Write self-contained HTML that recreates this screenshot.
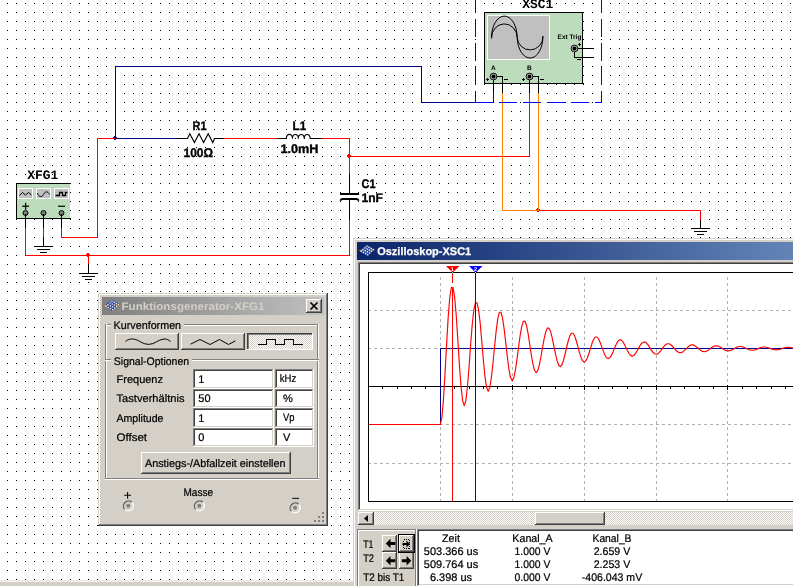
<!DOCTYPE html>
<html lang="de"><head><meta charset="utf-8"><title>Oszilloskop-XSC1</title>
<style>html,body{margin:0;padding:0;background:#fff;overflow:hidden}svg{display:block;will-change:transform}text{shape-rendering:auto;text-rendering:geometricPrecision}</style>
</head><body>
<svg width="793" height="586" viewBox="0 0 793 586" shape-rendering="crispEdges">
<defs><pattern id="g" x="0" y="0" width="9" height="9" patternUnits="userSpaceOnUse"><rect x="7" y="3" width="1" height="1" fill="#000"/></pattern><pattern id="dz" x="0" y="0" width="2" height="2" patternUnits="userSpaceOnUse"><rect width="2" height="2" fill="#fff"/><rect x="0" y="0" width="1" height="1" fill="#d4d0c8"/><rect x="1" y="1" width="1" height="1" fill="#d4d0c8"/></pattern><linearGradient id="tg" gradientUnits="userSpaceOnUse" x1="357" y1="0" x2="1113" y2="0"><stop offset="0" stop-color="#0a246a"/><stop offset="1" stop-color="#a6caf0"/></linearGradient><linearGradient id="ig" gradientUnits="userSpaceOnUse" x1="102" y1="0" x2="324" y2="0"><stop offset="0" stop-color="#808080"/><stop offset="1" stop-color="#c0c0c0"/></linearGradient></defs>
<rect x="0" y="0" width="793" height="586" fill="#fff"/>
<rect x="0" y="0" width="793" height="586" fill="url(#g)"/>
<rect x="0" y="580" width="353" height="1" fill="#ebe9e4"/>
<rect x="0" y="581" width="353" height="1" fill="#f6f5f2"/>
<rect x="0" y="582" width="353" height="4" fill="#d4d0c8"/>
<rect x="115" y="66" width="1" height="73" fill="#000084"/>
<rect x="115" y="66" width="307" height="1" fill="#000084"/>
<rect x="421" y="66" width="1" height="37" fill="#000084"/>
<rect x="421" y="102" width="55" height="1" fill="#000084"/>
<rect x="475" y="102" width="19" height="1" fill="#0000ff"/>
<rect x="493" y="93" width="1" height="10" fill="#0000ff"/>
<rect x="493" y="84" width="1" height="9" fill="#000000"/>
<rect x="115" y="138" width="64" height="1" fill="#000084"/>
<rect x="97" y="138" width="18" height="1" fill="#ff0000"/>
<rect x="97" y="138" width="1" height="100" fill="#ff0000"/>
<rect x="61" y="237" width="37" height="1" fill="#ff0000"/>
<rect x="25" y="213" width="1" height="15" fill="#000000"/>
<rect x="43" y="213" width="1" height="15" fill="#000000"/>
<rect x="61" y="213" width="1" height="15" fill="#000000"/>
<rect x="61" y="228" width="1" height="10" fill="#ff0000"/>
<rect x="25" y="228" width="1" height="28" fill="#ff0000"/>
<rect x="25" y="255" width="325" height="1" fill="#ff0000"/>
<rect x="43" y="228" width="1" height="9" fill="#ff0000"/>
<rect x="43" y="237" width="1" height="10" fill="#000000"/>
<rect x="34" y="246" width="19" height="1" fill="#000000"/>
<rect x="37" y="249" width="13" height="1" fill="#000000"/>
<rect x="40" y="252" width="7" height="1" fill="#000000"/>
<rect x="88" y="255" width="1" height="9" fill="#ff0000"/>
<rect x="88" y="264" width="1" height="10" fill="#000000"/>
<rect x="79" y="273" width="19" height="1" fill="#000000"/>
<rect x="82" y="276" width="13" height="1" fill="#000000"/>
<rect x="85" y="279" width="7" height="1" fill="#000000"/>
<rect x="178" y="138" width="10" height="1" fill="#000000"/>
<rect x="214" y="138" width="10" height="1" fill="#000000"/>
<path shape-rendering="auto" d="M187.5 138.5L189.8 133.8L194.4 142.6L199 133.8L203.6 142.6L208.2 133.8L212.8 142.6L214.5 138.5" fill="none" stroke="#000" stroke-width="1.1" stroke-linejoin="miter"/>
<rect x="224" y="138" width="53" height="1" fill="#ff0000"/>
<rect x="277" y="138" width="10" height="1" fill="#000000"/>
<rect x="310" y="138" width="12" height="1" fill="#000000"/>
<path shape-rendering="auto" d="M286.5 138.5C285.9 133.0 293.0 133.0 292.4 138.8C291.8 133.0 298.9 133.0 298.3 138.8C297.7 133.0 304.8 133.0 304.2 138.8C303.6 133.0 310.7 133.0 310.1 138.8" fill="none" stroke="#000" stroke-width="1.1"/>
<rect x="322" y="138" width="28" height="1" fill="#ff0000"/>
<rect x="349" y="138" width="1" height="36" fill="#ff0000"/>
<rect x="349" y="174" width="1" height="20" fill="#000000"/>
<rect x="349" y="199" width="1" height="21" fill="#000000"/>
<rect x="340" y="193" width="19" height="2" fill="#000000"/>
<rect x="342" y="198" width="15" height="2" fill="#000000"/>
<path shape-rendering="auto" d="M340.3 200.6 Q341 199 343 199 M356 199 Q358 199 358.700 200.600" fill="none" stroke="#000" stroke-width="1.8"/>
<rect x="349" y="220" width="1" height="36" fill="#ff0000"/>
<rect x="349" y="156" width="181" height="1" fill="#ff0000"/>
<rect x="529" y="93" width="1" height="64" fill="#ff0000"/>
<rect x="529" y="84" width="1" height="9" fill="#000000"/>
<rect x="502" y="93" width="1" height="118" fill="#ff8000"/>
<rect x="538" y="93" width="1" height="118" fill="#ff8000"/>
<rect x="502" y="210" width="37" height="1" fill="#ff8000"/>
<rect x="538" y="210" width="163" height="1" fill="#ff0000"/>
<rect x="700" y="210" width="1" height="10" fill="#ff0000"/>
<rect x="700" y="220" width="1" height="9" fill="#000000"/>
<rect x="691" y="228" width="19" height="1" fill="#000000"/>
<rect x="694" y="231" width="13" height="1" fill="#000000"/>
<rect x="697" y="234" width="7" height="1" fill="#000000"/>
<rect x="114" y="136" width="2" height="4" fill="#000084"/>
<rect x="113" y="137" width="4" height="2" fill="#000084"/>
<rect x="87" y="253" width="2" height="4" fill="#ff0000"/>
<rect x="86" y="254" width="4" height="2" fill="#ff0000"/>
<rect x="348" y="154" width="2" height="4" fill="#ff0000"/>
<rect x="347" y="155" width="4" height="2" fill="#ff0000"/>
<rect x="537" y="208" width="2" height="4" fill="#ff0000"/>
<rect x="536" y="209" width="4" height="2" fill="#ff0000"/>
<rect x="97" y="138" width="19" height="1" fill="#ff0000"/>
<rect x="538" y="93" width="1" height="118" fill="#ff8000"/>
<rect x="502" y="210" width="37" height="1" fill="#ff8000"/>
<text x="192.5" y="129.6" font-family="&quot;Liberation Sans&quot;, sans-serif" font-size="12.5" font-weight="bold" fill="#000" text-anchor="start" textLength="14" lengthAdjust="spacingAndGlyphs" stroke="#000" stroke-width="0.35">R1</text>
<text x="183.5" y="156.5" font-family="&quot;Liberation Sans&quot;, sans-serif" font-size="12.5" font-weight="bold" fill="#000" text-anchor="start" textLength="29.5" lengthAdjust="spacingAndGlyphs" stroke="#000" stroke-width="0.35">100Ω</text>
<text x="292.6" y="129.6" font-family="&quot;Liberation Sans&quot;, sans-serif" font-size="12.5" font-weight="bold" fill="#000" text-anchor="start" textLength="13.5" lengthAdjust="spacingAndGlyphs" stroke="#000" stroke-width="0.35">L1</text>
<text x="280.5" y="152.6" font-family="&quot;Liberation Sans&quot;, sans-serif" font-size="12.5" font-weight="bold" fill="#000" text-anchor="start" textLength="38" lengthAdjust="spacingAndGlyphs" stroke="#000" stroke-width="0.35">1.0mH</text>
<text x="361.5" y="187.6" font-family="&quot;Liberation Sans&quot;, sans-serif" font-size="12.5" font-weight="bold" fill="#000" text-anchor="start" textLength="14" lengthAdjust="spacingAndGlyphs" stroke="#000" stroke-width="0.35">C1</text>
<text x="361.5" y="201.6" font-family="&quot;Liberation Sans&quot;, sans-serif" font-size="12.5" font-weight="bold" fill="#000" text-anchor="start" textLength="21.5" lengthAdjust="spacingAndGlyphs" stroke="#000" stroke-width="0.35">1nF</text>
<rect x="16" y="183" width="54" height="36" fill="#bcdcbc"/>
<rect x="16" y="183" width="55" height="1" fill="#000000"/>
<rect x="16" y="218" width="55" height="1" fill="#000000"/>
<rect x="16" y="183" width="1" height="36" fill="#000000"/>
<rect x="70" y="183" width="1" height="1" fill="#000000"/>
<rect x="70" y="192" width="1" height="1" fill="#000000"/>
<rect x="70" y="201" width="1" height="1" fill="#000000"/>
<rect x="70" y="210" width="1" height="1" fill="#000000"/>
<rect x="70" y="219" width="1" height="1" fill="#000000"/>
<rect x="18" y="188" width="15" height="11" fill="#ffffff"/>
<rect x="19" y="189" width="13" height="9" fill="#c0c0c0"/>
<rect x="36" y="188" width="15" height="11" fill="#ffffff"/>
<rect x="37" y="189" width="13" height="9" fill="#c0c0c0"/>
<rect x="54" y="188" width="15" height="11" fill="#ffffff"/>
<rect x="55" y="189" width="13" height="9" fill="#c0c0c0"/>
<g shape-rendering="auto" fill="none" stroke="#000" stroke-width="1"><path d="M19.5 195.5L22.5 192.5L25.5 195L28.5 192.5L31.5 195"/><path d="M37.5 193C38.5 197.5 42 197.5 43.5 194.5C45 191 48 191 49.5 194.5"/></g>
<path d="M55.5 195.5H59.5V192.5H62.5V195.5H65.5V192.5H67.5" fill="none" stroke="#000" stroke-width="1.3" shape-rendering="auto"/>
<text x="25.5" y="211" font-family="&quot;Liberation Sans&quot;, sans-serif" font-size="14" font-weight="normal" fill="#000" text-anchor="middle" stroke="#000" stroke-width="0.2">+</text>
<text x="61.5" y="211" font-family="&quot;Liberation Sans&quot;, sans-serif" font-size="14" font-weight="normal" fill="#000" text-anchor="middle" stroke="#000" stroke-width="0.2">−</text>
<circle shape-rendering="auto" cx="25.5" cy="213" r="2.5" fill="#808080" stroke="#000" stroke-width="1"/>
<rect x="25" y="214" width="1" height="6" fill="#000000"/>
<circle shape-rendering="auto" cx="43.5" cy="213" r="2.5" fill="#808080" stroke="#000" stroke-width="1"/>
<rect x="43" y="214" width="1" height="6" fill="#000000"/>
<circle shape-rendering="auto" cx="61.5" cy="213" r="2.5" fill="#808080" stroke="#000" stroke-width="1"/>
<rect x="61" y="214" width="1" height="6" fill="#000000"/>
<text x="42.8" y="178.8" font-family="&quot;Liberation Mono&quot;, monospace" font-size="13" font-weight="bold" fill="#000" text-anchor="middle" textLength="31" lengthAdjust="spacingAndGlyphs">XFG1</text>
<rect x="484" y="12" width="99" height="72" fill="#bcdcbc"/>
<rect x="484" y="12" width="100" height="1" fill="#000000"/>
<rect x="484" y="83" width="100" height="1" fill="#000000"/>
<rect x="484" y="12" width="1" height="72" fill="#000000"/>
<rect x="582" y="12" width="1" height="72" fill="#000000"/>
<rect x="583" y="12" width="1" height="1" fill="#000000"/>
<rect x="583" y="21" width="1" height="1" fill="#000000"/>
<rect x="583" y="30" width="1" height="1" fill="#000000"/>
<rect x="583" y="39" width="1" height="1" fill="#000000"/>
<rect x="583" y="48" width="1" height="1" fill="#000000"/>
<rect x="583" y="57" width="1" height="1" fill="#000000"/>
<rect x="583" y="66" width="1" height="1" fill="#000000"/>
<rect x="583" y="75" width="1" height="1" fill="#000000"/>
<rect x="583" y="84" width="1" height="1" fill="#000000"/>
<rect x="487" y="15" width="63" height="45" fill="#ffffff"/>
<rect x="488" y="16" width="61" height="43" fill="#c0c0c0"/>
<path shape-rendering="auto" d="M491.5 38.2A12.8 21.6 0 0 1 517.2 37.3A12.8 21.2 0 0 0 542.900 36.200" fill="none" stroke="#000" stroke-width="1"/>
<path shape-rendering="auto" d="M491.5 38.2A12.8 13.8 0 0 1 517.2 37.3A12.8 13.1 0 0 0 542.900 36.200" fill="none" stroke="#000" stroke-width="1"/>
<text x="537.7" y="7.8" font-family="&quot;Liberation Mono&quot;, monospace" font-size="13" font-weight="bold" fill="#000" text-anchor="middle" textLength="31" lengthAdjust="spacingAndGlyphs">XSC1</text>
<rect x="493" y="76" width="10" height="1" fill="#000000"/>
<rect x="529" y="76" width="10" height="1" fill="#000000"/>
<rect x="493" y="76" width="1" height="9" fill="#000000"/>
<rect x="529" y="76" width="1" height="9" fill="#000000"/>
<rect x="502" y="76" width="1" height="17" fill="#000000"/>
<rect x="538" y="76" width="1" height="17" fill="#000000"/>
<circle shape-rendering="auto" cx="493.5" cy="76.5" r="3.4" fill="#b0b0b0" stroke="#000" stroke-width="0.9"/><circle shape-rendering="auto" cx="493.5" cy="76.5" r="1.9" fill="#000"/>
<circle shape-rendering="auto" cx="529.5" cy="76.5" r="3.4" fill="#b0b0b0" stroke="#000" stroke-width="0.9"/><circle shape-rendering="auto" cx="529.5" cy="76.5" r="1.9" fill="#000"/>
<text x="493.3" y="70.2" font-family="&quot;Liberation Sans&quot;, sans-serif" font-size="6.5" font-weight="bold" fill="#000" text-anchor="middle">A</text>
<text x="529.3" y="69.8" font-family="&quot;Liberation Sans&quot;, sans-serif" font-size="6.5" font-weight="bold" fill="#000" text-anchor="middle">B</text>
<rect x="486" y="79" width="3" height="1" fill="#000000"/>
<rect x="487" y="78" width="1" height="3" fill="#000000"/>
<rect x="504" y="79" width="4" height="1" fill="#000000"/>
<rect x="522" y="79" width="3" height="1" fill="#000000"/>
<rect x="523" y="78" width="1" height="3" fill="#000000"/>
<rect x="540" y="79" width="4" height="1" fill="#000000"/>
<rect x="574" y="48" width="20" height="1" fill="#000000"/>
<rect x="574" y="48" width="1" height="10" fill="#000000"/>
<rect x="574" y="57" width="20" height="1" fill="#000000"/>
<circle shape-rendering="auto" cx="574.5" cy="48.5" r="3.4" fill="#b0b0b0" stroke="#000" stroke-width="0.9"/><circle shape-rendering="auto" cx="574.5" cy="48.5" r="1.9" fill="#000"/>
<text x="557.6" y="38.8" font-family="&quot;Liberation Sans&quot;, sans-serif" font-size="6.5" font-weight="bold" fill="#000" text-anchor="start" textLength="23.8" lengthAdjust="spacingAndGlyphs">Ext Trig</text>
<rect x="578" y="44" width="3" height="1" fill="#000000"/>
<rect x="579" y="43" width="1" height="3" fill="#000000"/>
<rect x="577" y="59" width="4" height="1" fill="#000000"/>
<rect x="475" y="0" width="1" height="13" fill="#0000ff"/>
<rect x="475" y="19" width="1" height="18" fill="#0000ff"/>
<rect x="475" y="43" width="1" height="18" fill="#0000ff"/>
<rect x="475" y="67" width="1" height="18" fill="#0000ff"/>
<rect x="475" y="91" width="1" height="12" fill="#0000ff"/>
<rect x="601" y="0" width="1" height="13" fill="#0000ff"/>
<rect x="601" y="19" width="1" height="18" fill="#0000ff"/>
<rect x="601" y="43" width="1" height="18" fill="#0000ff"/>
<rect x="601" y="67" width="1" height="18" fill="#0000ff"/>
<rect x="601" y="91" width="1" height="12" fill="#0000ff"/>
<rect x="475" y="102" width="18" height="1" fill="#0000ff"/>
<rect x="499" y="102" width="18" height="1" fill="#0000ff"/>
<rect x="523" y="102" width="18" height="1" fill="#0000ff"/>
<rect x="547" y="102" width="18" height="1" fill="#0000ff"/>
<rect x="571" y="102" width="18" height="1" fill="#0000ff"/>
<rect x="595" y="102" width="7" height="1" fill="#0000ff"/>
<rect x="98" y="293" width="230" height="233" fill="#d4d0c8"/>
<rect x="98" y="525" width="230" height="1" fill="#404040"/>
<rect x="327" y="293" width="1" height="233" fill="#404040"/>
<rect x="99" y="524" width="228" height="1" fill="#808080"/>
<rect x="326" y="294" width="1" height="231" fill="#808080"/>
<rect x="99" y="294" width="227" height="1" fill="#ffffff"/>
<rect x="99" y="294" width="1" height="230" fill="#ffffff"/>
<rect x="102" y="297" width="222" height="18" fill="url(#ig)"/>
<text x="121.5" y="309.9" font-family="&quot;Liberation Sans&quot;, sans-serif" font-size="11" font-weight="bold" fill="#d4d0c8" text-anchor="start" textLength="143" lengthAdjust="spacingAndGlyphs">Funktionsgenerator-XFG1</text>
<g shape-rendering="auto"><path d="M104.3 305.8L111.8 299.8L119.8 304.2L112.2 311Z" fill="#2c4a9c"/><rect x="111.2" y="300.6" width="1.3" height="1.3" fill="#fff"/><rect x="109.3" y="302.3" width="1.3" height="1.3" fill="#fff"/><rect x="107.4" y="304.0" width="1.3" height="1.3" fill="#fff"/><rect x="105.5" y="305.7" width="1.3" height="1.3" fill="#fff"/><rect x="113.4" y="301.7" width="1.3" height="1.3" fill="#fff"/><rect x="111.5" y="303.4" width="1.3" height="1.3" fill="#fff"/><rect x="109.6" y="305.1" width="1.3" height="1.3" fill="#fff"/><rect x="107.7" y="306.8" width="1.3" height="1.3" fill="#fff"/><rect x="115.6" y="302.8" width="1.3" height="1.3" fill="#fff"/><rect x="113.7" y="304.5" width="1.3" height="1.3" fill="#fff"/><rect x="111.8" y="306.2" width="1.3" height="1.3" fill="#fff"/><rect x="109.9" y="307.9" width="1.3" height="1.3" fill="#fff"/><rect x="117.8" y="303.9" width="1.3" height="1.3" fill="#fff"/><rect x="115.9" y="305.6" width="1.3" height="1.3" fill="#fff"/><rect x="114.0" y="307.3" width="1.3" height="1.3" fill="#fff"/><rect x="112.1" y="309.0" width="1.3" height="1.3" fill="#fff"/><path d="M104.5 305.5H107.5M115.5 305H119" stroke="#f0a020" stroke-width="1.2"/></g>
<rect x="306" y="299" width="16" height="14" fill="#d4d0c8"/>
<rect x="306" y="312" width="16" height="1" fill="#404040"/>
<rect x="321" y="299" width="1" height="14" fill="#404040"/>
<rect x="306" y="299" width="15" height="1" fill="#ffffff"/>
<rect x="306" y="299" width="1" height="13" fill="#ffffff"/>
<rect x="307" y="311" width="14" height="1" fill="#808080"/>
<rect x="320" y="300" width="1" height="12" fill="#808080"/>
<path shape-rendering="auto" d="M310.5 302.5L317.5 309.5M317.5 302.5L310.5 309.5" stroke="#000" stroke-width="1.7" fill="none"/>
<rect x="105" y="324" width="214" height="1" fill="#808080"/>
<rect x="105" y="325" width="214" height="1" fill="#ffffff"/>
<rect x="105" y="324" width="1" height="155" fill="#808080"/>
<rect x="106" y="324" width="1" height="155" fill="#ffffff"/>
<rect x="317" y="324" width="1" height="155" fill="#808080"/>
<rect x="318" y="324" width="1" height="155" fill="#ffffff"/>
<rect x="105" y="478" width="214" height="1" fill="#808080"/>
<rect x="105" y="479" width="214" height="1" fill="#ffffff"/>
<rect x="105" y="359" width="214" height="1" fill="#808080"/>
<rect x="105" y="360" width="214" height="1" fill="#ffffff"/>
<rect x="111" y="318" width="73" height="14" fill="#d4d0c8"/>
<text x="113.6" y="329" font-family="&quot;Liberation Sans&quot;, sans-serif" font-size="11" font-weight="normal" fill="#000" text-anchor="start" textLength="67.5" lengthAdjust="spacingAndGlyphs" stroke="#000" stroke-width="0.22">Kurvenformen</text>
<rect x="111" y="353" width="81" height="14" fill="#d4d0c8"/>
<text x="113.8" y="365" font-family="&quot;Liberation Sans&quot;, sans-serif" font-size="11" font-weight="normal" fill="#000" text-anchor="start" textLength="75.3" lengthAdjust="spacingAndGlyphs" stroke="#000" stroke-width="0.22">Signal-Optionen</text>
<rect x="115" y="333" width="64" height="17" fill="#d4d0c8"/>
<rect x="115" y="349" width="64" height="1" fill="#404040"/>
<rect x="178" y="333" width="1" height="17" fill="#404040"/>
<rect x="115" y="333" width="63" height="1" fill="#ffffff"/>
<rect x="115" y="333" width="1" height="16" fill="#ffffff"/>
<rect x="116" y="348" width="62" height="1" fill="#808080"/>
<rect x="177" y="334" width="1" height="15" fill="#808080"/>
<rect x="181" y="333" width="64" height="17" fill="#d4d0c8"/>
<rect x="181" y="349" width="64" height="1" fill="#404040"/>
<rect x="244" y="333" width="1" height="17" fill="#404040"/>
<rect x="181" y="333" width="63" height="1" fill="#ffffff"/>
<rect x="181" y="333" width="1" height="16" fill="#ffffff"/>
<rect x="182" y="348" width="62" height="1" fill="#808080"/>
<rect x="243" y="334" width="1" height="15" fill="#808080"/>
<rect x="247" y="333" width="66" height="17" fill="url(#dz)"/>
<rect x="247" y="333" width="66" height="1" fill="#404040"/>
<rect x="247" y="333" width="1" height="17" fill="#404040"/>
<rect x="248" y="334" width="64" height="1" fill="#808080"/>
<rect x="248" y="334" width="1" height="15" fill="#808080"/>
<rect x="247" y="349" width="66" height="1" fill="#ffffff"/>
<rect x="312" y="333" width="1" height="17" fill="#ffffff"/>
<g shape-rendering="auto" fill="none" stroke="#000" stroke-width="1"><path d="M125.5 341.3C128 339.2 131 338.8 133.5 339C139 339.5 142 344.4 148.5 344.4C155 344.4 158 339.5 164 339C166.500 338.800 168.500 339.800 170.500 341.500"/><path d="M190.5 344.2L200 339.5L210 344.5L219.5 339.5L228.5 344.5L235.5 340.8"/></g>
<path d="M257.5 344.5H266.5V339.5H275.5V344.5H284.5V339.5H293.5V344.5H302.5" fill="none" stroke="#000" stroke-width="1"/>
<rect x="193" y="369" width="81" height="20" fill="#ffffff"/>
<rect x="193" y="369" width="81" height="1" fill="#808080"/>
<rect x="193" y="369" width="1" height="20" fill="#808080"/>
<rect x="194" y="370" width="79" height="1" fill="#404040"/>
<rect x="194" y="370" width="1" height="18" fill="#404040"/>
<rect x="193" y="388" width="81" height="1" fill="#ffffff"/>
<rect x="273" y="369" width="1" height="20" fill="#ffffff"/>
<rect x="194" y="387" width="79" height="1" fill="#d4d0c8"/>
<rect x="272" y="370" width="1" height="18" fill="#d4d0c8"/>
<rect x="275" y="369" width="39" height="20" fill="#ffffff"/>
<rect x="275" y="369" width="39" height="1" fill="#808080"/>
<rect x="275" y="369" width="1" height="20" fill="#808080"/>
<rect x="276" y="370" width="37" height="1" fill="#404040"/>
<rect x="276" y="370" width="1" height="18" fill="#404040"/>
<rect x="275" y="388" width="39" height="1" fill="#ffffff"/>
<rect x="313" y="369" width="1" height="20" fill="#ffffff"/>
<rect x="276" y="387" width="37" height="1" fill="#d4d0c8"/>
<rect x="312" y="370" width="1" height="18" fill="#d4d0c8"/>
<text x="116.5" y="382.6" font-family="&quot;Liberation Sans&quot;, sans-serif" font-size="11" font-weight="normal" fill="#000" text-anchor="start" textLength="46.5" lengthAdjust="spacingAndGlyphs" stroke="#000" stroke-width="0.22">Frequenz</text>
<text x="198.3" y="382.6" font-family="&quot;Liberation Sans&quot;, sans-serif" font-size="11" font-weight="normal" fill="#000" text-anchor="start" stroke="#000" stroke-width="0.22">1</text>
<text x="279.8" y="381.6" font-family="&quot;Liberation Sans&quot;, sans-serif" font-size="11" font-weight="normal" fill="#000" text-anchor="start" textLength="16.5" lengthAdjust="spacingAndGlyphs" stroke="#000" stroke-width="0.22">kHz</text>
<rect x="193" y="389" width="81" height="19" fill="#ffffff"/>
<rect x="193" y="389" width="81" height="1" fill="#808080"/>
<rect x="193" y="389" width="1" height="19" fill="#808080"/>
<rect x="194" y="390" width="79" height="1" fill="#404040"/>
<rect x="194" y="390" width="1" height="17" fill="#404040"/>
<rect x="193" y="407" width="81" height="1" fill="#ffffff"/>
<rect x="273" y="389" width="1" height="19" fill="#ffffff"/>
<rect x="194" y="406" width="79" height="1" fill="#d4d0c8"/>
<rect x="272" y="390" width="1" height="17" fill="#d4d0c8"/>
<rect x="275" y="389" width="39" height="19" fill="#ffffff"/>
<rect x="275" y="389" width="39" height="1" fill="#808080"/>
<rect x="275" y="389" width="1" height="19" fill="#808080"/>
<rect x="276" y="390" width="37" height="1" fill="#404040"/>
<rect x="276" y="390" width="1" height="17" fill="#404040"/>
<rect x="275" y="407" width="39" height="1" fill="#ffffff"/>
<rect x="313" y="389" width="1" height="19" fill="#ffffff"/>
<rect x="276" y="406" width="37" height="1" fill="#d4d0c8"/>
<rect x="312" y="390" width="1" height="17" fill="#d4d0c8"/>
<text x="116.5" y="402.3" font-family="&quot;Liberation Sans&quot;, sans-serif" font-size="11" font-weight="normal" fill="#000" text-anchor="start" textLength="68" lengthAdjust="spacingAndGlyphs" stroke="#000" stroke-width="0.22">Tastverhältnis</text>
<text x="198.3" y="402.3" font-family="&quot;Liberation Sans&quot;, sans-serif" font-size="11" font-weight="normal" fill="#000" text-anchor="start" stroke="#000" stroke-width="0.22">50</text>
<text x="283" y="401.7" font-family="&quot;Liberation Sans&quot;, sans-serif" font-size="11" font-weight="normal" fill="#000" text-anchor="start" stroke="#000" stroke-width="0.22">%</text>
<rect x="193" y="408" width="81" height="20" fill="#ffffff"/>
<rect x="193" y="408" width="81" height="1" fill="#808080"/>
<rect x="193" y="408" width="1" height="20" fill="#808080"/>
<rect x="194" y="409" width="79" height="1" fill="#404040"/>
<rect x="194" y="409" width="1" height="18" fill="#404040"/>
<rect x="193" y="427" width="81" height="1" fill="#ffffff"/>
<rect x="273" y="408" width="1" height="20" fill="#ffffff"/>
<rect x="194" y="426" width="79" height="1" fill="#d4d0c8"/>
<rect x="272" y="409" width="1" height="18" fill="#d4d0c8"/>
<rect x="275" y="408" width="39" height="20" fill="#ffffff"/>
<rect x="275" y="408" width="39" height="1" fill="#808080"/>
<rect x="275" y="408" width="1" height="20" fill="#808080"/>
<rect x="276" y="409" width="37" height="1" fill="#404040"/>
<rect x="276" y="409" width="1" height="18" fill="#404040"/>
<rect x="275" y="427" width="39" height="1" fill="#ffffff"/>
<rect x="313" y="408" width="1" height="20" fill="#ffffff"/>
<rect x="276" y="426" width="37" height="1" fill="#d4d0c8"/>
<rect x="312" y="409" width="1" height="18" fill="#d4d0c8"/>
<text x="116.5" y="421.5" font-family="&quot;Liberation Sans&quot;, sans-serif" font-size="11" font-weight="normal" fill="#000" text-anchor="start" textLength="47" lengthAdjust="spacingAndGlyphs" stroke="#000" stroke-width="0.22">Amplitude</text>
<text x="198.3" y="421.5" font-family="&quot;Liberation Sans&quot;, sans-serif" font-size="11" font-weight="normal" fill="#000" text-anchor="start" stroke="#000" stroke-width="0.22">1</text>
<text x="283" y="420.6" font-family="&quot;Liberation Sans&quot;, sans-serif" font-size="11" font-weight="normal" fill="#000" text-anchor="start" textLength="11.5" lengthAdjust="spacingAndGlyphs" stroke="#000" stroke-width="0.22">Vp</text>
<rect x="193" y="428" width="81" height="19" fill="#ffffff"/>
<rect x="193" y="428" width="81" height="1" fill="#808080"/>
<rect x="193" y="428" width="1" height="19" fill="#808080"/>
<rect x="194" y="429" width="79" height="1" fill="#404040"/>
<rect x="194" y="429" width="1" height="17" fill="#404040"/>
<rect x="193" y="446" width="81" height="1" fill="#ffffff"/>
<rect x="273" y="428" width="1" height="19" fill="#ffffff"/>
<rect x="194" y="445" width="79" height="1" fill="#d4d0c8"/>
<rect x="272" y="429" width="1" height="17" fill="#d4d0c8"/>
<rect x="275" y="428" width="39" height="19" fill="#ffffff"/>
<rect x="275" y="428" width="39" height="1" fill="#808080"/>
<rect x="275" y="428" width="1" height="19" fill="#808080"/>
<rect x="276" y="429" width="37" height="1" fill="#404040"/>
<rect x="276" y="429" width="1" height="17" fill="#404040"/>
<rect x="275" y="446" width="39" height="1" fill="#ffffff"/>
<rect x="313" y="428" width="1" height="19" fill="#ffffff"/>
<rect x="276" y="445" width="37" height="1" fill="#d4d0c8"/>
<rect x="312" y="429" width="1" height="17" fill="#d4d0c8"/>
<text x="116.5" y="441" font-family="&quot;Liberation Sans&quot;, sans-serif" font-size="11" font-weight="normal" fill="#000" text-anchor="start" textLength="30.5" lengthAdjust="spacingAndGlyphs" stroke="#000" stroke-width="0.22">Offset</text>
<text x="198.3" y="441" font-family="&quot;Liberation Sans&quot;, sans-serif" font-size="11" font-weight="normal" fill="#000" text-anchor="start" stroke="#000" stroke-width="0.22">0</text>
<text x="283" y="440.6" font-family="&quot;Liberation Sans&quot;, sans-serif" font-size="11" font-weight="normal" fill="#000" text-anchor="start" stroke="#000" stroke-width="0.22">V</text>
<rect x="141" y="452" width="150" height="22" fill="#d4d0c8"/>
<rect x="141" y="473" width="150" height="1" fill="#404040"/>
<rect x="290" y="452" width="1" height="22" fill="#404040"/>
<rect x="141" y="452" width="149" height="1" fill="#ffffff"/>
<rect x="141" y="452" width="1" height="21" fill="#ffffff"/>
<rect x="142" y="472" width="148" height="1" fill="#808080"/>
<rect x="289" y="453" width="1" height="20" fill="#808080"/>
<text x="145" y="466.6" font-family="&quot;Liberation Sans&quot;, sans-serif" font-size="11" font-weight="normal" fill="#000" text-anchor="start" textLength="140.5" lengthAdjust="spacingAndGlyphs" stroke="#000" stroke-width="0.22">Anstiegs-/Abfallzeit einstellen</text>
<text x="127.5" y="500" font-family="&quot;Liberation Sans&quot;, sans-serif" font-size="14" font-weight="normal" fill="#000" text-anchor="middle">+</text>
<text x="295.5" y="503" font-family="&quot;Liberation Sans&quot;, sans-serif" font-size="14" font-weight="normal" fill="#000" text-anchor="middle">−</text>
<text x="183.5" y="495.7" font-family="&quot;Liberation Sans&quot;, sans-serif" font-size="11" font-weight="normal" fill="#000" text-anchor="start" textLength="29.5" lengthAdjust="spacingAndGlyphs" stroke="#000" stroke-width="0.22">Masse</text>
<g shape-rendering="auto"><circle cx="128.3" cy="505.8" r="5" fill="#d4d0c8" stroke="#fff" stroke-width="1.3"/><path d="M124.70000000000002 509.40000000000003A5.1 5.1 0 0 1 131.9 502.2" fill="none" stroke="#606060" stroke-width="1.4"/><circle cx="128.3" cy="505.8" r="2" fill="#808080"/></g>
<g shape-rendering="auto"><circle cx="199.3" cy="505.8" r="5" fill="#d4d0c8" stroke="#fff" stroke-width="1.3"/><path d="M195.70000000000002 509.40000000000003A5.1 5.1 0 0 1 202.9 502.2" fill="none" stroke="#606060" stroke-width="1.4"/><circle cx="199.3" cy="505.8" r="2" fill="#808080"/></g>
<g shape-rendering="auto"><circle cx="295" cy="507.8" r="5" fill="#d4d0c8" stroke="#fff" stroke-width="1.3"/><path d="M291.4 511.40000000000003A5.1 5.1 0 0 1 298.6 504.2" fill="none" stroke="#606060" stroke-width="1.4"/><circle cx="295" cy="507.8" r="2" fill="#808080"/></g>
<rect x="322" y="512" width="2" height="2" fill="#808080"/>
<rect x="318" y="516" width="2" height="2" fill="#808080"/>
<rect x="322" y="516" width="2" height="2" fill="#808080"/>
<rect x="314" y="520" width="2" height="2" fill="#808080"/>
<rect x="318" y="520" width="2" height="2" fill="#808080"/>
<rect x="322" y="520" width="2" height="2" fill="#808080"/>
<rect x="353" y="238" width="440" height="348" fill="#d4d0c8"/>
<rect x="354" y="239" width="439" height="1" fill="#ffffff"/>
<rect x="354" y="239" width="1" height="347" fill="#ffffff"/>
<rect x="357" y="242" width="436" height="18" fill="url(#tg)"/>
<g shape-rendering="auto"><path d="M359.3 250.8L366.8 244.8L374.8 249.2L367.2 256Z" fill="#2c4a9c"/><rect x="366.2" y="245.6" width="1.3" height="1.3" fill="#fff"/><rect x="364.3" y="247.3" width="1.3" height="1.3" fill="#fff"/><rect x="362.4" y="249.0" width="1.3" height="1.3" fill="#fff"/><rect x="360.5" y="250.7" width="1.3" height="1.3" fill="#fff"/><rect x="368.4" y="246.7" width="1.3" height="1.3" fill="#fff"/><rect x="366.5" y="248.4" width="1.3" height="1.3" fill="#fff"/><rect x="364.6" y="250.1" width="1.3" height="1.3" fill="#fff"/><rect x="362.7" y="251.8" width="1.3" height="1.3" fill="#fff"/><rect x="370.6" y="247.8" width="1.3" height="1.3" fill="#fff"/><rect x="368.7" y="249.5" width="1.3" height="1.3" fill="#fff"/><rect x="366.8" y="251.2" width="1.3" height="1.3" fill="#fff"/><rect x="364.9" y="252.9" width="1.3" height="1.3" fill="#fff"/><rect x="372.8" y="248.9" width="1.3" height="1.3" fill="#fff"/><rect x="370.9" y="250.6" width="1.3" height="1.3" fill="#fff"/><rect x="369.0" y="252.3" width="1.3" height="1.3" fill="#fff"/><rect x="367.1" y="254.0" width="1.3" height="1.3" fill="#fff"/><path d="M359.5 250.5H362.5M370.5 250H374" stroke="#f0a020" stroke-width="1.2"/></g>
<text x="377.2" y="254.7" font-family="&quot;Liberation Sans&quot;, sans-serif" font-size="11" font-weight="bold" fill="#ffffff" text-anchor="start" textLength="94" lengthAdjust="spacingAndGlyphs" stroke="#ffffff" stroke-width="0.25">Oszilloskop-XSC1</text>
<rect x="360" y="264" width="433" height="245" fill="#ffffff"/>
<rect x="358" y="262" width="435" height="1" fill="#808080"/>
<rect x="359" y="263" width="434" height="1" fill="#404040"/>
<rect x="358" y="262" width="1" height="248" fill="#808080"/>
<rect x="359" y="263" width="1" height="246" fill="#404040"/>
<rect x="359" y="509" width="434" height="1" fill="#d4d0c8"/>
<rect x="358" y="510" width="435" height="1" fill="#ffffff"/>
<path d="M440.5 277V501" stroke="#b0b0b0" stroke-width="1" stroke-dasharray="3 3" fill="none"/>
<path d="M512.5 277V501" stroke="#b0b0b0" stroke-width="1" stroke-dasharray="3 3" fill="none"/>
<path d="M584.5 277V501" stroke="#b0b0b0" stroke-width="1" stroke-dasharray="3 3" fill="none"/>
<path d="M656.5 277V501" stroke="#b0b0b0" stroke-width="1" stroke-dasharray="3 3" fill="none"/>
<path d="M727.5 277V501" stroke="#b0b0b0" stroke-width="1" stroke-dasharray="3 3" fill="none"/>
<path d="M368 310.5H793" stroke="#b0b0b0" stroke-width="1" stroke-dasharray="3 3" fill="none"/>
<path d="M368 348.5H793" stroke="#b0b0b0" stroke-width="1" stroke-dasharray="3 3" fill="none"/>
<path d="M368 424.5H793" stroke="#b0b0b0" stroke-width="1" stroke-dasharray="3 3" fill="none"/>
<path d="M368 463.5H793" stroke="#b0b0b0" stroke-width="1" stroke-dasharray="3 3" fill="none"/>
<rect x="368" y="272" width="425" height="1" fill="#000000"/>
<rect x="368" y="501" width="425" height="1" fill="#000000"/>
<rect x="368" y="272" width="1" height="230" fill="#000000"/>
<rect x="368" y="386" width="425" height="1" fill="#000000"/>
<rect x="368" y="385" width="1" height="5" fill="#000000"/>
<rect x="382" y="386" width="1" height="3" fill="#000000"/>
<rect x="397" y="386" width="1" height="3" fill="#000000"/>
<rect x="411" y="386" width="1" height="3" fill="#000000"/>
<rect x="425" y="386" width="1" height="3" fill="#000000"/>
<rect x="440" y="385" width="1" height="5" fill="#000000"/>
<rect x="454" y="386" width="1" height="3" fill="#000000"/>
<rect x="469" y="386" width="1" height="3" fill="#000000"/>
<rect x="483" y="386" width="1" height="3" fill="#000000"/>
<rect x="497" y="386" width="1" height="3" fill="#000000"/>
<rect x="512" y="385" width="1" height="5" fill="#000000"/>
<rect x="526" y="386" width="1" height="3" fill="#000000"/>
<rect x="540" y="386" width="1" height="3" fill="#000000"/>
<rect x="555" y="386" width="1" height="3" fill="#000000"/>
<rect x="569" y="386" width="1" height="3" fill="#000000"/>
<rect x="584" y="385" width="1" height="5" fill="#000000"/>
<rect x="598" y="386" width="1" height="3" fill="#000000"/>
<rect x="612" y="386" width="1" height="3" fill="#000000"/>
<rect x="627" y="386" width="1" height="3" fill="#000000"/>
<rect x="641" y="386" width="1" height="3" fill="#000000"/>
<rect x="656" y="385" width="1" height="5" fill="#000000"/>
<rect x="670" y="386" width="1" height="3" fill="#000000"/>
<rect x="684" y="386" width="1" height="3" fill="#000000"/>
<rect x="699" y="386" width="1" height="3" fill="#000000"/>
<rect x="713" y="386" width="1" height="3" fill="#000000"/>
<rect x="727" y="385" width="1" height="5" fill="#000000"/>
<rect x="742" y="386" width="1" height="3" fill="#000000"/>
<rect x="756" y="386" width="1" height="3" fill="#000000"/>
<rect x="771" y="386" width="1" height="3" fill="#000000"/>
<rect x="785" y="386" width="1" height="3" fill="#000000"/>
<rect x="369" y="424" width="72" height="1" fill="#000090"/>
<rect x="440" y="348" width="1" height="77" fill="#000090"/>
<rect x="440" y="348" width="353" height="1" fill="#000090"/>
<path shape-rendering="auto" d="M369.0 424.5L439.5 424.5L440.2 424.7L441.8 418.2L443.4 400.1L445.0 373.9L446.6 344.4L448.2 317.1L449.8 297.3L451.4 287.3L453.0 287.3L454.6 296.8L456.2 315.0L457.8 339.2L459.4 364.6L461.0 386.2L462.6 400.6L464.2 405.6L465.8 400.7L467.4 387.2L469.0 367.5L470.6 345.4L472.2 325.0L473.8 310.2L475.4 302.9L477.0 302.9L478.6 309.9L480.2 323.4L481.8 341.6L483.4 360.5L485.0 376.8L486.6 387.6L488.2 391.3L489.8 387.7L491.4 377.5L493.0 362.8L494.6 346.2L496.2 330.6L497.8 318.6L499.4 312.2L501.0 312.2L502.6 318.4L504.2 329.4L505.8 343.3L507.4 357.5L509.0 369.7L510.6 377.8L512.2 380.6L513.8 377.9L515.4 370.2L517.0 359.2L518.6 346.8L520.2 335.1L521.8 326.1L523.4 321.3L525.0 321.3L526.6 325.9L528.2 334.2L529.8 344.6L531.4 355.3L533.0 364.4L534.6 370.5L536.2 372.6L537.8 370.5L539.4 364.8L541.0 356.5L542.6 347.2L544.2 338.4L545.8 331.7L547.4 328.1L549.0 328.1L550.6 331.6L552.2 337.8L553.8 345.6L555.4 353.6L557.0 360.4L558.6 365.0L560.2 366.6L561.8 365.0L563.4 360.7L565.0 354.5L566.6 347.5L568.2 341.0L569.8 335.9L571.4 333.2L573.0 333.2L574.6 335.8L576.2 340.5L577.8 346.3L579.4 352.3L581.0 357.4L582.6 360.8L584.2 362.0L585.8 360.9L587.4 357.7L589.0 353.0L590.6 347.8L592.2 342.8L593.8 339.1L595.4 337.0L597.0 337.0L598.6 339.0L600.2 342.5L601.8 346.9L603.4 351.4L605.0 355.2L606.6 357.8L608.2 358.6L609.8 357.8L611.4 355.4L613.0 351.9L614.6 347.9L616.2 344.3L617.8 341.4L619.4 339.9L621.0 339.9L622.6 341.4L624.2 344.0L625.8 347.3L627.4 350.6L629.0 353.5L630.6 355.4L632.2 356.1L633.8 355.5L635.4 353.7L637.0 351.0L638.6 348.1L640.2 345.3L641.8 343.2L643.4 342.1L645.0 342.1L646.6 343.1L648.2 345.1L649.8 347.6L651.4 350.1L653.0 352.3L654.6 353.7L656.2 354.2L657.8 353.7L659.4 352.4L661.0 350.4L662.6 348.2L664.2 346.1L665.8 344.5L667.4 343.7L669.0 343.7L670.6 344.5L672.2 346.0L673.8 347.8L675.4 349.7L677.0 351.3L678.6 352.4L680.2 352.8L681.8 352.4L683.4 351.4L685.0 349.9L686.6 348.3L688.2 346.7L689.8 345.5L691.4 344.9L693.0 344.9L694.6 345.5L696.2 346.6L697.8 348.0L699.4 349.4L701.0 350.6L702.6 351.4L704.2 351.7L705.8 351.4L707.4 350.7L709.0 349.6L710.6 348.3L712.2 347.2L713.8 346.3L715.4 345.8L717.0 345.8L718.6 346.2L720.2 347.1L721.8 348.1L723.4 349.2L725.0 350.1L726.6 350.7L728.2 350.9L729.8 350.7L731.4 350.1L733.0 349.3L734.6 348.4L736.2 347.5L737.8 346.8L739.4 346.5L741.0 346.5L742.6 346.8L744.2 347.4L745.8 348.2L747.4 349.0L749.0 349.7L750.6 350.1L752.2 350.3L753.8 350.1L755.4 349.7L757.0 349.1L758.6 348.4L760.2 347.7L761.8 347.2L763.4 347.0L765.0 347.0L766.6 347.2L768.2 347.7L769.8 348.3L771.4 348.9L773.0 349.4L774.6 349.7L776.2 349.9L777.8 349.7L779.4 349.4L781.0 349.0L782.6 348.4L784.2 347.9L785.8 347.6L787.4 347.4L789.0 347.4L790.6 347.5L792.2 347.9L793.8 348.3" fill="none" stroke="#ff0000" stroke-width="1.15" stroke-linejoin="round"/>
<rect x="452" y="273" width="1" height="228" fill="#ff0000"/>
<rect x="475" y="273" width="1" height="228" fill="#0000ff"/>
<rect x="452" y="283" width="1" height="4" fill="#ffffff"/>
<path shape-rendering="auto" d="M446 266H459.500L452.700 272.800Z" fill="#ff0000"/><path shape-rendering="auto" d="M469 266H482.500L475.700 272.800Z" fill="#0000ff"/>
<text x="452.4" y="271" font-family="&quot;Liberation Sans&quot;, sans-serif" font-size="5.5" font-weight="bold" fill="#fff" text-anchor="middle" shape-rendering="auto">1</text>
<text x="475.6" y="271" font-family="&quot;Liberation Sans&quot;, sans-serif" font-size="5.5" font-weight="bold" fill="#fff" text-anchor="middle" shape-rendering="auto">2</text>
<rect x="452" y="272" width="1" height="1" fill="#00ffff"/>
<rect x="475" y="272" width="1" height="1" fill="#ffff00"/>
<rect x="358" y="512" width="435" height="13" fill="url(#dz)"/>
<rect x="358" y="512" width="16" height="13" fill="#d4d0c8"/>
<rect x="358" y="524" width="16" height="1" fill="#404040"/>
<rect x="373" y="512" width="1" height="13" fill="#404040"/>
<rect x="358" y="512" width="15" height="1" fill="#ffffff"/>
<rect x="358" y="512" width="1" height="12" fill="#ffffff"/>
<rect x="359" y="523" width="14" height="1" fill="#808080"/>
<rect x="372" y="513" width="1" height="11" fill="#808080"/>
<path d="M368 515V522L364 518.500Z" fill="#000" shape-rendering="auto"/>
<rect x="535" y="512" width="70" height="13" fill="#d4d0c8"/>
<rect x="535" y="524" width="70" height="1" fill="#404040"/>
<rect x="604" y="512" width="1" height="13" fill="#404040"/>
<rect x="535" y="512" width="69" height="1" fill="#ffffff"/>
<rect x="535" y="512" width="1" height="12" fill="#ffffff"/>
<rect x="536" y="523" width="68" height="1" fill="#808080"/>
<rect x="603" y="513" width="1" height="11" fill="#808080"/>
<rect x="357" y="529" width="59" height="1" fill="#808080"/>
<rect x="358" y="530" width="58" height="1" fill="#ffffff"/>
<rect x="357" y="529" width="1" height="57" fill="#808080"/>
<rect x="358" y="530" width="1" height="56" fill="#ffffff"/>
<rect x="415" y="530" width="1" height="56" fill="#808080"/>
<rect x="416" y="529" width="1" height="57" fill="#ffffff"/>
<text x="363.2" y="547.6" font-family="&quot;Liberation Sans&quot;, sans-serif" font-size="11" font-weight="normal" fill="#000" text-anchor="start" textLength="10.2" lengthAdjust="spacingAndGlyphs" stroke="#000" stroke-width="0.22">T1</text>
<text x="363.2" y="561.7" font-family="&quot;Liberation Sans&quot;, sans-serif" font-size="11" font-weight="normal" fill="#000" text-anchor="start" textLength="10.8" lengthAdjust="spacingAndGlyphs" stroke="#000" stroke-width="0.22">T2</text>
<text x="363.2" y="581.3" font-family="&quot;Liberation Sans&quot;, sans-serif" font-size="11" font-weight="normal" fill="#000" text-anchor="start" textLength="41" lengthAdjust="spacingAndGlyphs" stroke="#000" stroke-width="0.22">T2 bis T1</text>
<rect x="382" y="535" width="15" height="17" fill="#d4d0c8"/>
<rect x="382" y="551" width="15" height="1" fill="#404040"/>
<rect x="396" y="535" width="1" height="17" fill="#404040"/>
<rect x="382" y="535" width="14" height="1" fill="#ffffff"/>
<rect x="382" y="535" width="1" height="16" fill="#ffffff"/>
<rect x="383" y="550" width="13" height="1" fill="#808080"/>
<rect x="395" y="536" width="1" height="15" fill="#808080"/>
<rect x="382" y="552" width="15" height="17" fill="#d4d0c8"/>
<rect x="382" y="568" width="15" height="1" fill="#404040"/>
<rect x="396" y="552" width="1" height="17" fill="#404040"/>
<rect x="382" y="552" width="14" height="1" fill="#ffffff"/>
<rect x="382" y="552" width="1" height="16" fill="#ffffff"/>
<rect x="383" y="567" width="13" height="1" fill="#808080"/>
<rect x="395" y="553" width="1" height="15" fill="#808080"/>
<rect x="399" y="552" width="15" height="17" fill="#d4d0c8"/>
<rect x="399" y="568" width="15" height="1" fill="#404040"/>
<rect x="413" y="552" width="1" height="17" fill="#404040"/>
<rect x="399" y="552" width="14" height="1" fill="#ffffff"/>
<rect x="399" y="552" width="1" height="16" fill="#ffffff"/>
<rect x="400" y="567" width="13" height="1" fill="#808080"/>
<rect x="412" y="553" width="1" height="15" fill="#808080"/>
<rect x="399" y="535" width="15" height="17" fill="#d4d0c8"/>
<rect x="399" y="551" width="15" height="1" fill="#404040"/>
<rect x="413" y="535" width="1" height="17" fill="#404040"/>
<rect x="399" y="535" width="14" height="1" fill="#ffffff"/>
<rect x="399" y="535" width="1" height="16" fill="#ffffff"/>
<rect x="400" y="550" width="13" height="1" fill="#808080"/>
<rect x="412" y="536" width="1" height="15" fill="#808080"/>
<rect x="398.5" y="534.5" width="16" height="18" fill="none" stroke="#000" stroke-width="1"/>
<rect x="403.5" y="539.500" width="6" height="9" fill="none" stroke="#000" stroke-width="1" stroke-dasharray="1 1"/>
<path shape-rendering="auto" d="M385.8 543.5L390.5 538.8V542.0H395.3V545.0H390.5V548.2Z" fill="#000"/>
<path shape-rendering="auto" d="M385.8 560.7L390.5 556.0V559.2H395.3V562.2H390.5V565.4000000000001Z" fill="#000"/>
<path shape-rendering="auto" d="M411.3 560.7L406.6 556.0V559.2H401.8V562.2H406.6V565.4000000000001Z" fill="#000"/>
<path shape-rendering="auto" d="M410 544L406.500 540.500V543H402.500V545H406.500V547.500Z" fill="#000"/>
<rect x="419" y="531" width="374" height="55" fill="#ffffff"/>
<rect x="417" y="529" width="376" height="1" fill="#808080"/>
<rect x="418" y="530" width="375" height="1" fill="#404040"/>
<rect x="417" y="529" width="1" height="57" fill="#808080"/>
<rect x="418" y="530" width="1" height="56" fill="#404040"/>
<rect x="419" y="584" width="374" height="1" fill="#d4d0c8"/>
<rect x="418" y="585" width="375" height="1" fill="#ffffff"/>
<text x="451" y="541.9" font-family="&quot;Liberation Sans&quot;, sans-serif" font-size="11" font-weight="normal" fill="#000" text-anchor="middle" textLength="17.8" lengthAdjust="spacingAndGlyphs" stroke="#000" stroke-width="0.22">Zeit</text>
<text x="451" y="554.9" font-family="&quot;Liberation Sans&quot;, sans-serif" font-size="11" font-weight="normal" fill="#000" text-anchor="middle" stroke="#000" stroke-width="0.22">503.366 us</text>
<text x="451" y="567.9" font-family="&quot;Liberation Sans&quot;, sans-serif" font-size="11" font-weight="normal" fill="#000" text-anchor="middle" stroke="#000" stroke-width="0.22">509.764 us</text>
<text x="451" y="580.8" font-family="&quot;Liberation Sans&quot;, sans-serif" font-size="11" font-weight="normal" fill="#000" text-anchor="middle" stroke="#000" stroke-width="0.22">6.398 us</text>
<text x="532.5" y="541.9" font-family="&quot;Liberation Sans&quot;, sans-serif" font-size="11" font-weight="normal" fill="#000" text-anchor="middle" textLength="40.3" lengthAdjust="spacingAndGlyphs" stroke="#000" stroke-width="0.22">Kanal_A</text>
<text x="532.5" y="554.9" font-family="&quot;Liberation Sans&quot;, sans-serif" font-size="11" font-weight="normal" fill="#000" text-anchor="middle" textLength="35.8" lengthAdjust="spacingAndGlyphs" stroke="#000" stroke-width="0.22">1.000 V</text>
<text x="532.5" y="567.9" font-family="&quot;Liberation Sans&quot;, sans-serif" font-size="11" font-weight="normal" fill="#000" text-anchor="middle" textLength="35.8" lengthAdjust="spacingAndGlyphs" stroke="#000" stroke-width="0.22">1.000 V</text>
<text x="532.5" y="580.8" font-family="&quot;Liberation Sans&quot;, sans-serif" font-size="11" font-weight="normal" fill="#000" text-anchor="middle" textLength="35.8" lengthAdjust="spacingAndGlyphs" stroke="#000" stroke-width="0.22">0.000 V</text>
<text x="612" y="541.9" font-family="&quot;Liberation Sans&quot;, sans-serif" font-size="11" font-weight="normal" fill="#000" text-anchor="middle" textLength="39" lengthAdjust="spacingAndGlyphs" stroke="#000" stroke-width="0.22">Kanal_B</text>
<text x="612" y="554.9" font-family="&quot;Liberation Sans&quot;, sans-serif" font-size="11" font-weight="normal" fill="#000" text-anchor="middle" textLength="36.6" lengthAdjust="spacingAndGlyphs" stroke="#000" stroke-width="0.22">2.659 V</text>
<text x="612" y="567.9" font-family="&quot;Liberation Sans&quot;, sans-serif" font-size="11" font-weight="normal" fill="#000" text-anchor="middle" textLength="36.6" lengthAdjust="spacingAndGlyphs" stroke="#000" stroke-width="0.22">2.253 V</text>
<text x="612" y="580.8" font-family="&quot;Liberation Sans&quot;, sans-serif" font-size="11" font-weight="normal" fill="#000" text-anchor="middle" textLength="60.4" lengthAdjust="spacingAndGlyphs" stroke="#000" stroke-width="0.22">-406.043 mV</text>
</svg>
</body></html>
